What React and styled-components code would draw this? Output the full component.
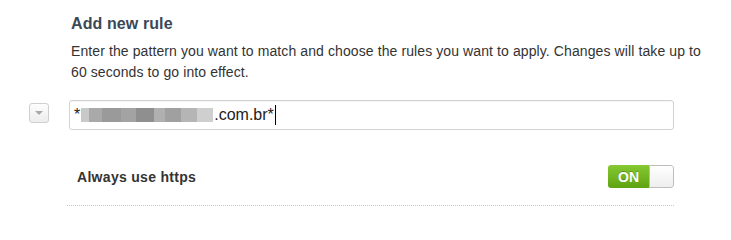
import React from "react";
import styled, { createGlobalStyle } from "styled-components";

const Global = createGlobalStyle`
  html, body { margin: 0; padding: 0; background: #fff; }
  body { font-family: "Liberation Sans", Arial, Helvetica, sans-serif; }
`;

const Page = styled.div`
  width: 731px;
  height: 214px;
  overflow: hidden;
  background: #fff;
  padding-top: 14px;
  box-sizing: border-box;
`;

const Intro = styled.div`
  margin-left: 71px;
  width: 640px;
`;

const Heading = styled.h2`
  margin: 0;
  font-size: 16px;
  line-height: 20px;
  font-weight: bold;
  color: #3b4857;
  letter-spacing: 0.1px;
`;

const Description = styled.p`
  margin: 7px 0 0;
  font-size: 14px;
  line-height: 21px;
  letter-spacing: 0.1px;
  color: #333;
`;

const RuleRow = styled.div`
  display: flex;
  align-items: flex-start;
  gap: 20px;
  margin-top: 17px;
  padding-left: 29px;
`;

const DropButton = styled.div`
  margin-top: 3px;
  width: 20px;
  height: 20px;
  box-sizing: border-box;
  border: 1px solid #cfcfcf;
  border-radius: 3px;
  background: linear-gradient(#fdfdfd, #ededed);
  display: flex;
  align-items: center;
  justify-content: center;
`;

const Caret = styled.span`
  width: 0;
  height: 0;
  border-left: 4px solid transparent;
  border-right: 4px solid transparent;
  border-top: 4px solid #a9a9a9;
`;

const PatternField = styled.div`
  width: 605px;
  height: 30px;
  box-sizing: border-box;
  border: 1px solid #d2d2d2;
  border-radius: 3px;
  display: flex;
  align-items: center;
  padding-left: 4px;
  font-size: 16px;
  color: #222;
  box-shadow: inset 0 1px 1px rgba(0, 0, 0, 0.04);
`;

const Blur = styled.span`
  display: inline-block;
  width: 132px;
  height: 14px;
  margin: 0 1px 0 1px;
  background: linear-gradient(
    90deg,
    #c9c9c9 0 6%,
    #a9a9a9 6% 16%,
    #9a9a9a 16% 30%,
    #a3a3a3 30% 42%,
    #8f8f8f 42% 55%,
    #b0b0b0 55% 64%,
    #a0a0a0 64% 76%,
    #b5b5b5 76% 88%,
    #cfcfcf 88% 100%
  );
`;

const Cursor = styled.span`
  display: inline-block;
  width: 1px;
  height: 20px;
  background: #000;
  margin-left: 1px;
`;

const SettingRow = styled.div`
  margin: 35px 0 0 67px;
  width: 607px;
  display: flex;
  align-items: center;
  justify-content: space-between;
  padding-bottom: 17px;
  border-bottom: 1px dotted #c8c8c8;
`;

const Label = styled.span`
  padding-left: 10px;
  font-size: 14px;
  font-weight: bold;
  letter-spacing: 0.3px;
  color: #333;
`;

const Toggle = styled.div`
  display: flex;
  width: 66px;
  height: 23px;
  border-radius: 3px;
  overflow: hidden;
`;

const OnPart = styled.span`
  width: 41px;
  background: linear-gradient(#86c932, #5ea310);
  color: #fff;
  font-size: 14px;
  font-weight: bold;
  display: flex;
  align-items: center;
  justify-content: center;
  text-shadow: 0 -1px 0 rgba(0, 0, 0, 0.25);
`;

const Knob = styled.span`
  flex: 1;
  box-sizing: border-box;
  border: 1px solid #bdbdbd;
  border-radius: 0 3px 3px 0;
  background: linear-gradient(#ffffff, #eeeeee);
`;

export default function App() {
  return (
    <>
      <Global />
      <Page>
        <Intro>
          <Heading>Add new rule</Heading>
          <Description>
            Enter the pattern you want to match and choose the rules you want to apply. Changes will take up to
            60 seconds to go into effect.
          </Description>
        </Intro>
        <RuleRow>
          <DropButton>
            <Caret />
          </DropButton>
          <PatternField>
            *<Blur />.com.br*<Cursor />
          </PatternField>
        </RuleRow>
        <SettingRow>
          <Label>Always use https</Label>
          <Toggle>
            <OnPart>ON</OnPart>
            <Knob />
          </Toggle>
        </SettingRow>
      </Page>
    </>
  );
}
